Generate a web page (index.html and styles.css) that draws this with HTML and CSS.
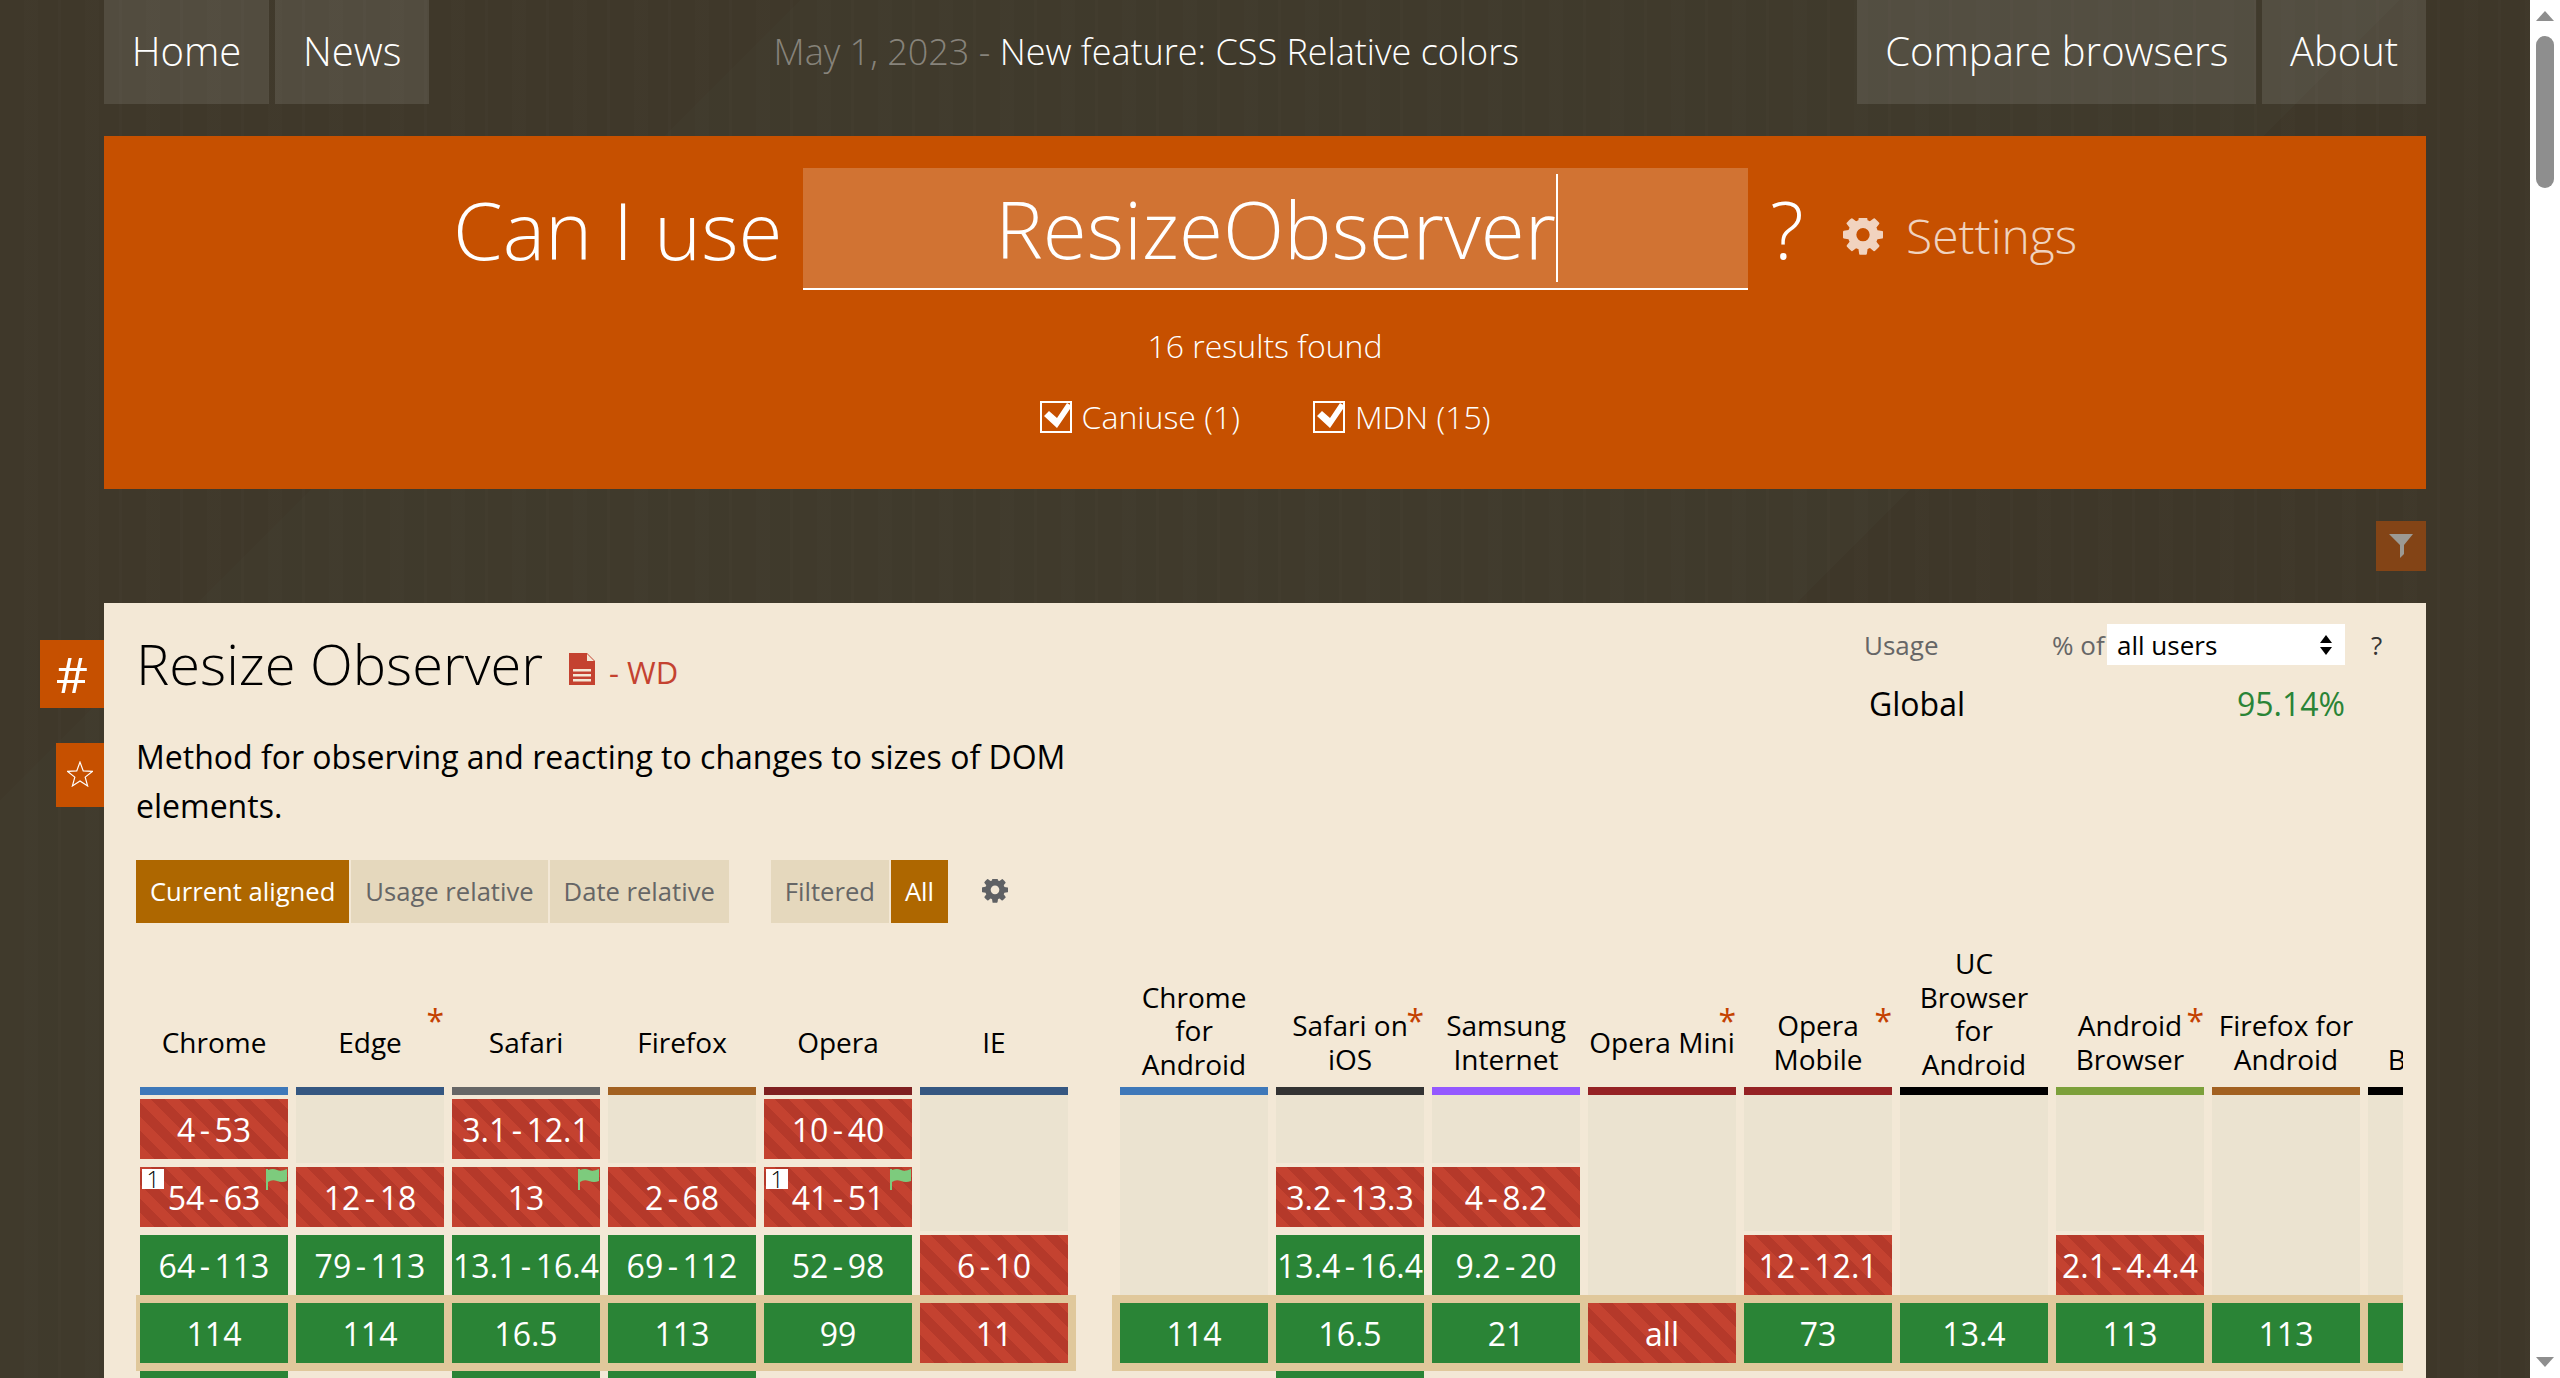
FILE: index.html
```html
<!DOCTYPE html>
<html lang="en">
<head>
<meta charset="utf-8">
<title>Can I use... ResizeObserver</title>
<link rel="stylesheet" href="styles.css">
</head>
<body>
<div class="page">
  <nav class="nav">
    <a class="tab">Home</a>
    <a class="tab">News</a>
    <div class="ticker"><span class="date">May 1, 2023 - </span>New feature: CSS Relative colors</div>
    <a class="tab">Compare browsers</a>
    <a class="tab">About</a>
  </nav>

  <section class="hero">
    <div class="search">
      <span class="can">Can I use</span>
      <div class="input"><span class="query">ResizeObserver</span></div>
      <span class="qm">?</span>
      <svg class="hero-gear" viewBox="0 0 1536 1536"><path fill-rule="evenodd" d="M1024 640q0-106-75-181t-181-75-181 75-75 181 75 181 181 75 181-75 75-181zm512-109v222q0 12-8 23t-20 13l-185 28q-19 54-39 91 35 50 107 138 10 12 10 25t-9 23q-27 37-99 108t-94 71q-12 0-26-9l-138-108q-44 23-91 38-16 136-29 186-7 28-36 28h-222q-14 0-24.5-8.5t-11.5-21.5l-28-184q-49-16-90-37l-141 107q-10 9-25 9-14 0-25-11-126-114-165-168-7-10-7-23 0-12 8-23 15-21 51-66.5t54-70.5q-27-50-41-99l-183-27q-13-2-21-12.5t-8-23.5v-222q0-12 8-23t19-13l186-28q14-46 39-92-40-57-107-138-10-12-10-24 0-10 9-23 26-36 98.5-107.5t94.5-71.5q13 0 26 10l138 107q44-23 91-38 16-136 29-186 7-28 36-28h222q14 0 24.5 8.5t11.5 21.5l28 184q49 16 90 37l142-107q9-9 24-9 13 0 25 10 129 119 165 170 7 8 7 22 0 12-8 23-15 21-51 66.5t-54 70.5q26 50 41 98l183 28q13 2 21 12.5t8 23.5z"/></svg>
      <span class="settings">Settings</span>
    </div>
    <div class="results">16 results found</div>
    <div class="checks">
      <label class="check"><svg class="box" viewBox="0 0 32 32"><rect x="1" y="1" width="30" height="30" fill="none" stroke="#fff" stroke-width="2"/><path d="M4 15l5-5 8 7L27 2l5 3L17 27z" fill="#fff"/></svg>Caniuse (1)</label>
      <label class="check"><svg class="box" viewBox="0 0 32 32"><rect x="1" y="1" width="30" height="30" fill="none" stroke="#fff" stroke-width="2"/><path d="M4 15l5-5 8 7L27 2l5 3L17 27z" fill="#fff"/></svg>MDN (15)</label>
    </div>
  </section>

  <div class="filter-row">
    <div class="filter"><svg viewBox="0 0 26 26"><path d="M1 1h24L16 12v9l-4 4V12z"/></svg></div>
  </div>

  <main class="panel">
    <a class="side hash">#</a>
    <a class="side star"><svg viewBox="0 0 24 24"><path d="M12 1l3 8.2 8.4.4-6.6 5.3 2.2 8.1-7-4.6-7 4.6 2.2-8.1L.6 9.6 9 9.2z" fill="none" stroke="#fff" stroke-width="1.1"/></svg></a>

    <header class="head">
      <div class="intro">
        <h1 class="title">Resize Observer<svg class="doc" viewBox="0 0 26 32"><path d="M0 0h18l8 8v24H0z"/><path d="M18 1l7 7h-7z" fill="#f3e8d6"/><path d="M4 16h18v2.500H4zM4 21h18v2.500H4zM4 26h18v2.500H4z" fill="#f3e8d6"/></svg><span class="status">- WD</span></h1>
        <p class="desc">Method for observing and reacting to changes to sizes of DOM elements.</p>
        <div class="controls">
          <div class="btns">
            <span class="btn on">Current aligned</span>
            <span class="btn">Usage relative</span>
            <span class="btn">Date relative</span>
          </div>
          <div class="btns">
            <span class="btn">Filtered</span>
            <span class="btn on">All</span>
          </div>
          <svg class="gear" viewBox="0 0 1536 1536"><path fill-rule="evenodd" d="M1024 640q0-106-75-181t-181-75-181 75-75 181 75 181 181 75 181-75 75-181zm512-109v222q0 12-8 23t-20 13l-185 28q-19 54-39 91 35 50 107 138 10 12 10 25t-9 23q-27 37-99 108t-94 71q-12 0-26-9l-138-108q-44 23-91 38-16 136-29 186-7 28-36 28h-222q-14 0-24.5-8.5t-11.5-21.5l-28-184q-49-16-90-37l-141 107q-10 9-25 9-14 0-25-11-126-114-165-168-7-10-7-23 0-12 8-23 15-21 51-66.5t54-70.5q-27-50-41-99l-183-27q-13-2-21-12.5t-8-23.5v-222q0-12 8-23t19-13l186-28q14-46 39-92-40-57-107-138-10-12-10-24 0-10 9-23 26-36 98.5-107.5t94.5-71.5q13 0 26 10l138 107q44-23 91-38 16-136 29-186 7-28 36-28h222q14 0 24.5 8.5t11.5 21.5l28 184q49 16 90 37l142-107q9-9 24-9 13 0 25 10 129 119 165 170 7 8 7 22 0 12-8 23-15 21-51 66.5t-54 70.5q26 50 41 98l183 28q13 2 21 12.5t8 23.5z"/></svg>
        </div>
      </div>
      <aside class="usage">
        <div class="usage-top">
          <span class="u-label">Usage</span>
          <span class="u-of">% of</span>
          <div class="select">all users<svg viewBox="0 0 14 22"><path d="M7 1l6 8H1zM7 21l-6-8h12z"/></svg></div>
          <span class="u-q">?</span>
        </div>
        <div class="usage-row"><span>Global</span><span class="pct">95.14%</span></div>
      </aside>
    </header>

    <div class="tables">
      <div class="tbl left">
        <div class="col">
          <div class="th">Chrome</div><div class="bar b-chrome"></div>
          <div class="cell red">4<i>-</i>53</div>
          <div class="cell red"><span class="note">1</span><svg class="flag" viewBox="0 0 21 21"><path d="M0 0h2v21H0zM2 1q5-2 9 0t10-1v12q-5 2-10 0t-9 1z"/></svg>54<i>-</i>63</div>
          <div class="cell green">64<i>-</i>113</div>
          <div class="cell green cur">114</div>
          <div class="cell green"></div>
        </div>
        <div class="col">
          <div class="th">Edge<span class="ast">*</span></div><div class="bar b-edge"></div>
          <div class="none s1"></div>
          <div class="cell red">12<i>-</i>18</div>
          <div class="cell green">79<i>-</i>113</div>
          <div class="cell green cur">114</div>
        </div>
        <div class="col">
          <div class="th">Safari</div><div class="bar b-safari"></div>
          <div class="cell red">3.1<i>-</i>12.1</div>
          <div class="cell red"><svg class="flag" viewBox="0 0 21 21"><path d="M0 0h2v21H0zM2 1q5-2 9 0t10-1v12q-5 2-10 0t-9 1z"/></svg>13</div>
          <div class="cell green">13.1<i>-</i>16.4</div>
          <div class="cell green cur">16.5</div>
          <div class="cell green"></div>
        </div>
        <div class="col">
          <div class="th">Firefox</div><div class="bar b-firefox"></div>
          <div class="none s1"></div>
          <div class="cell red">2<i>-</i>68</div>
          <div class="cell green">69<i>-</i>112</div>
          <div class="cell green cur">113</div>
          <div class="cell green"></div>
        </div>
        <div class="col">
          <div class="th">Opera</div><div class="bar b-opera"></div>
          <div class="cell red">10<i>-</i>40</div>
          <div class="cell red"><span class="note">1</span><svg class="flag" viewBox="0 0 21 21"><path d="M0 0h2v21H0zM2 1q5-2 9 0t10-1v12q-5 2-10 0t-9 1z"/></svg>41<i>-</i>51</div>
          <div class="cell green">52<i>-</i>98</div>
          <div class="cell green cur">99</div>
        </div>
        <div class="col">
          <div class="th">IE</div><div class="bar b-edge"></div>
          <div class="none s2"></div>
          <div class="cell red">6<i>-</i>10</div>
          <div class="cell red cur">11</div>
        </div>
      </div>

      <div class="tbl right">
        <div class="col">
          <div class="th tall">Chrome for Android</div><div class="bar b-chrome"></div>
          <div class="none s3"></div>
          <div class="cell green cur">114</div>
        </div>
        <div class="col">
          <div class="th">Safari on iOS<span class="ast">*</span></div><div class="bar b-ios"></div>
          <div class="none s1"></div>
          <div class="cell red">3.2<i>-</i>13.3</div>
          <div class="cell green">13.4<i>-</i>16.4</div>
          <div class="cell green cur">16.5</div>
          <div class="cell green"></div>
        </div>
        <div class="col">
          <div class="th">Samsung Internet</div><div class="bar b-samsung"></div>
          <div class="none s1"></div>
          <div class="cell red">4<i>-</i>8.2</div>
          <div class="cell green">9.2<i>-</i>20</div>
          <div class="cell green cur">21</div>
        </div>
        <div class="col">
          <div class="th">Opera Mini<span class="ast">*</span></div><div class="bar b-mini"></div>
          <div class="none s3"></div>
          <div class="cell red cur">all</div>
        </div>
        <div class="col">
          <div class="th">Opera Mobile<span class="ast">*</span></div><div class="bar b-mini"></div>
          <div class="none s2"></div>
          <div class="cell red">12<i>-</i>12.1</div>
          <div class="cell green cur">73</div>
        </div>
        <div class="col">
          <div class="th tall">UC Browser for Android</div><div class="bar b-uc"></div>
          <div class="none s3"></div>
          <div class="cell green cur">13.4</div>
        </div>
        <div class="col">
          <div class="th">Android Browser<span class="ast">*</span></div><div class="bar b-android"></div>
          <div class="none s2"></div>
          <div class="cell red">2.1<i>-</i>4.4.4</div>
          <div class="cell green cur">113</div>
        </div>
        <div class="col">
          <div class="th">Firefox for Android</div><div class="bar b-firefox"></div>
          <div class="none s3"></div>
          <div class="cell green cur">113</div>
        </div>
        <div class="col">
          <div class="th">QQ<br>Browser</div><div class="bar b-uc"></div>
          <div class="none s3"></div>
          <div class="cell green cur"></div>
        </div>
      </div>
    </div>
  </main>
</div>

<div class="scrollbar">
  <span class="arrow up"></span>
  <span class="thumb"></span>
  <span class="arrow down"></span>
</div>
</body>
</html>
```

FILE: styles.css
```css
* { box-sizing: border-box; }
html, body { margin: 0; height: 100%; overflow: hidden; }
body {
  display: flex;
  width: 2560px;
  height: 1378px;
  font-family: "Open Sans", "Liberation Sans", sans-serif;
  background: #fff;
}

.page {
  width: 2530px;
  height: 1378px;
  padding: 0 104px;
  overflow: hidden;
  flex: none;
  background:
    repeating-linear-gradient(90deg, rgba(255,255,255,0) 0 24px, rgba(255,255,255,.008) 24px 38px, rgba(0,0,0,.008) 38px 58px, rgba(255,255,255,.012) 58px 61px),
    linear-gradient(135deg, #3f382a 0 566px, #403a2c 566px 1697px, #3e3729 1697px);
}

/* top nav */
.nav { display: flex; height: 104px; gap: 6px; font-weight: 300; font-size: 40px; color: #fff; }
.tab {
  display: flex;
  align-items: center;
  padding: 0 27.800px 4px;
  background: rgba(255,255,255,.1);
  white-space: nowrap;
}
.ticker {
  flex: 1;
  display: flex;
  align-items: center;
  justify-content: center;
  padding: 0 0 2px 6px;
  font-size: 36px;
  white-space: pre;
}
.date { color: rgba(255,255,255,.38); }

/* hero */
.hero {
  margin-top: 32px;
  height: 353px;
  background: #c65000;
  color: #fff;
  font-weight: 300;
  padding-top: 32px;
}
.search { display: flex; align-items: center; height: 122px; padding-left: 349px; }
.can { font-size: 80px; width: 350px; white-space: nowrap; margin-top: -2px; }
.input {
  width: 945px;
  height: 122px;
  background: rgba(255,255,255,.2);
  border-bottom: 2px solid #fff;
  display: flex;
  align-items: center;
  justify-content: center;
  font-size: 80px;
}
.query { border-right: 2px solid #fff; line-height: 108px; margin-left: 2px; }
.qm { font-size: 80px; margin-left: 22px; margin-top: -4px; width: 73px; }
.hero-gear { width: 40px; height: 40px; fill: rgba(255,255,255,.75); margin-top: 18px; }
.settings { font-size: 48px; margin-left: 23px; margin-top: 12px; color: rgba(255,255,255,.75); }
.results { margin-top: 34px; text-align: center; font-size: 32px; line-height: 44px; }
.checks { display: flex; justify-content: center; gap: 73px; margin-top: 27px; font-size: 32px; line-height: 44px; }
.check { display: flex; align-items: center; gap: 10px; }
.box { width: 32px; height: 32px; flex: none; overflow: visible; }

/* filter */
.filter-row { display: flex; justify-content: flex-end; margin-top: 32px; height: 50px; }
.filter {
  width: 50px;
  height: 50px;
  background: #834416;
  display: flex;
  align-items: center;
  justify-content: center;
}
.filter svg { width: 26px; height: 26px; fill: #9c9a94; }

/* panel */
.panel {
  position: relative;
  margin-top: 32px;
  height: 900px;
  padding: 0 32px;
  background: #f3e8d6;
  color: #000;
}
.side {
  position: absolute;
  right: 100%;
  background: #c65000;
  color: #fff;
  display: flex;
  align-items: center;
  justify-content: center;
}
.hash { top: 37px; width: 64px; height: 68px; font-size: 50px; font-weight: 400; }
.star { top: 140px; width: 48px; height: 64px; padding-bottom: 2px; }
.star svg { width: 26px; height: 26px; }

.head { display: flex; justify-content: space-between; }
.intro { width: 960px; }
.title { margin: 22px 0 0; height: 76px; font-size: 56px; font-weight: 300; line-height: 76px; display: flex; align-items: center; white-space: pre; }
.doc { width: 26px; height: 32px; fill: #c44230; margin-left: 26px; margin-top: 12px; }
.status { color: #c44230; font-size: 31px; font-weight: 400; line-height: 40px; margin-left: 14px; margin-top: 18px; }
.desc { margin: 31px 0 0; font-size: 32px; line-height: 49px; font-weight: 400; }
.controls { display: flex; align-items: center; margin-top: 30px; }
.btns { display: flex; gap: 2px; margin-right: 42px; }
.btn {
  height: 63px;
  display: flex;
  align-items: center;
  padding: 0 14px;
  font-size: 25.600px;
  background: #e5d8bd;
  color: #666;
}
.btn.on { background: #ae6700; color: #fff; }
.gear { width: 26px; height: 26px; fill: #5f6164; margin-left: -8px; }

.usage { width: 510px; margin-top: 21px; margin-right: 20px; font-size: 26px; color: #666; }
.usage-top { display: flex; align-items: center; height: 41px; }
.usage-top > * { flex: none; }
.u-label { width: 188px; }
.u-of { width: 55px; }
.select {
  width: 238px;
  height: 41px;
  background: #fff;
  color: #000;
  display: flex;
  align-items: center;
  justify-content: space-between;
  padding: 0 12px 0 10px;
}
.select svg { width: 14px; height: 22px; fill: #000; }
.u-q { margin-left: 26px; color: #333; }
.usage-row {
  display: flex;
  justify-content: space-between;
  width: 481px;
  padding-left: 5px;
  margin-top: 17px;
  font-size: 32px;
  color: #000;
}
.pct { color: #2a8436; }

/* tables */
.tables { display: flex; margin-top: 24px; }
.tbl { display: flex; gap: 8px; overflow: hidden; flex: none; height: 440px; align-items: flex-start; }
.left { padding: 0 8px 0 4px; }
.right { margin-left: 36px; padding-left: 8px; width: 1291px; }
.col { width: 148px; flex: none; display: flex; flex-direction: column; }
.th {
  position: relative;
  height: 140px;
  padding-top: 50px;
  display: flex;
  align-items: center;
  justify-content: center;
  text-align: center;
  font-size: 28px;
  line-height: 34px;
}
.th.tall { align-items: flex-end; padding: 0 0 6px; line-height: 33.400px; }
.ast {
  position: absolute;
  right: 0;
  top: 58px;
  color: #c44100;
  font-size: 32px;
  line-height: 32px;
}
.bar { height: 8px; flex: none; }
.b-chrome { background: #3e78b9; }
.b-edge { background: #355781; }
.b-safari { background: #666; }
.b-firefox { background: #a26121; }
.b-opera { background: #7f2020; }
.b-ios { background: #333; }
.b-samsung { background: #9458ff; }
.b-mini { background: #952224; }
.b-uc { background: #000; }
.b-android { background: #7ca03a; }

.none { background: #ebe3d0; flex: none; }
.s1 { height: 68px; }
.s2 { height: 136px; }
.s3 { height: 204px; }

.cell {
  position: relative;
  flex: none;
  height: 60px;
  margin: 4px 0;
  display: flex;
  align-items: center;
  justify-content: center;
  color: #fff;
  font-size: 32px;
  white-space: nowrap;
}
.cell i { font-style: normal; margin: 0 4.500px; }
.green { background: #2a8436; }
.red { background: repeating-linear-gradient(45deg, #c44230 0 10px, #b5392a 10px 20px); }
.cur { box-shadow: 0 0 0 8px #e0c89b; }
.note {
  position: absolute;
  left: 2px;
  top: 2px;
  width: 22px;
  height: 20px;
  background: #fff;
  color: #000;
  font-size: 23px;
  font-weight: 300;
  line-height: 20px;
  text-align: center;
}
.flag { position: absolute; right: 1px; top: 2px; width: 21px; height: 21px; fill: #7dcb7d; }

/* scrollbar */
.scrollbar { width: 30px; flex: none; background: #fff; position: relative; }
.thumb { position: absolute; left: 6px; top: 36px; width: 18px; height: 152px; border-radius: 9px; background: #8e8e8e; }
.arrow { position: absolute; left: 6px; width: 0; height: 0; border-left: 9px solid transparent; border-right: 9px solid transparent; }
.up { top: 11px; border-bottom: 10px solid #8e8e8e; }
.down { top: 1357px; border-top: 10px solid #8e8e8e; }
```
